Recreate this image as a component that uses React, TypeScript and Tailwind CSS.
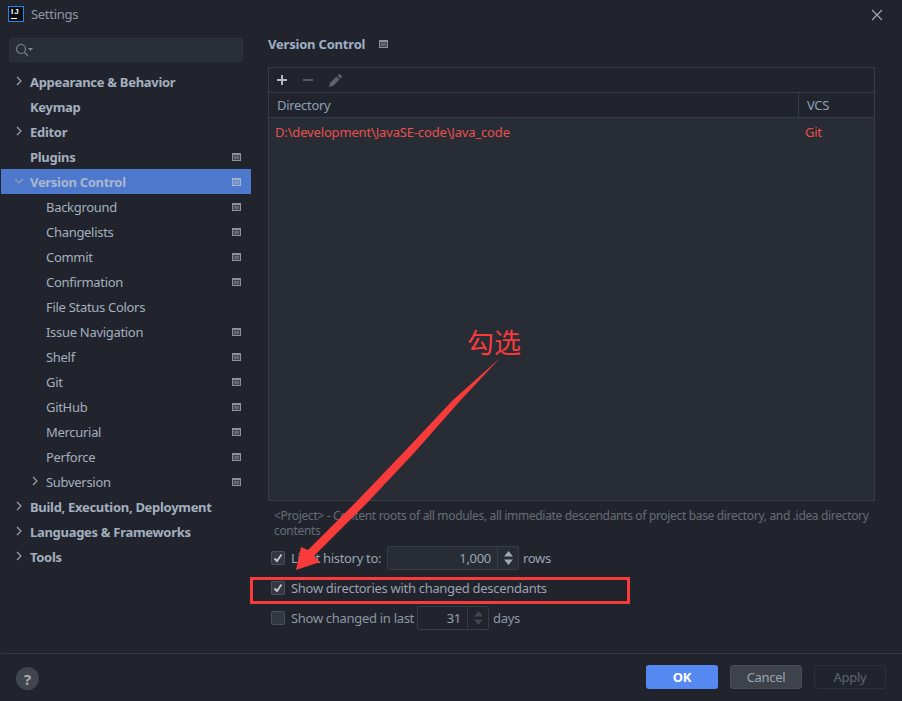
import React from "react";

const Badge = ({ className = "text-[#8b929c]" }: { className?: string }) => (
  <svg width="9" height="8" viewBox="0 0 9 8" className={className}>
    <path d="M0 0h9v8H0z M1 2v5h7V2z" fill="currentColor" fillRule="evenodd" />
    <path d="M1 2h7v5H1z" fill="currentColor" opacity="0.3" />
    <path d="M2 3h5v3H2z" fill="currentColor" opacity="0.45" />
  </svg>
);

const Chevron = ({ down = false, color = "#9aa1ab" }: { down?: boolean; color?: string }) => (
  <svg width="10" height="10" viewBox="0 0 10 10" fill="none" stroke={color} strokeWidth="1.2">
    {down ? <path d="M1 3l4 4 4-4" /> : <path d="M3 1l4 4-4 4" />}
  </svg>
);

type Item = { label: string; level: 0 | 1; chev?: boolean; badge?: boolean; selected?: boolean };

const items: Item[] = [
  { label: "Appearance & Behavior", level: 0, chev: true },
  { label: "Keymap", level: 0 },
  { label: "Editor", level: 0, chev: true },
  { label: "Plugins", level: 0, badge: true },
  { label: "Version Control", level: 0, chev: true, badge: true, selected: true },
  { label: "Background", level: 1, badge: true },
  { label: "Changelists", level: 1, badge: true },
  { label: "Commit", level: 1, badge: true },
  { label: "Confirmation", level: 1, badge: true },
  { label: "File Status Colors", level: 1 },
  { label: "Issue Navigation", level: 1, badge: true },
  { label: "Shelf", level: 1, badge: true },
  { label: "Git", level: 1, badge: true },
  { label: "GitHub", level: 1, badge: true },
  { label: "Mercurial", level: 1, badge: true },
  { label: "Perforce", level: 1, badge: true },
  { label: "Subversion", level: 1, chev: true, badge: true },
  { label: "Build, Execution, Deployment", level: 0, chev: true },
  { label: "Languages & Frameworks", level: 0, chev: true },
  { label: "Tools", level: 0, chev: true },
];

const Row = ({ item }: { item: Item }) => (
  <div className={`relative flex h-[25px] items-center pr-[10px] ${item.selected ? "bg-[#4e78cc]" : ""} ${item.level === 0 ? "pl-[29px]" : "pl-[45px]"}`}>
    {item.chev && (
      <span className={`absolute top-[7px] ${item.level === 0 ? "left-[13px]" : "left-[29px]"}`}>
        <Chevron down={item.selected} />
      </span>
    )}
    <span className={`flex-1 ${item.level === 0 ? "font-bold" : ""} ${item.selected ? "text-[#a9b7cf]" : "text-[#a3afbf]"}`}>{item.label}</span>
    {item.badge && <Badge className={item.selected ? "text-[#a3b3cf]" : "text-[#8b929c]"} />}
  </div>
);

const Check = ({ on }: { on: boolean }) => (
  <span className="flex h-[14px] w-[14px] shrink-0 items-center justify-center rounded-[2px] border border-[#4b505a] bg-[#333741]">
    {on && (
      <svg width="10" height="10" viewBox="0 0 10 10" fill="none" stroke="#c4c9d2" strokeWidth="1.8">
        <path d="M1.5 5.5l2.5 2.5L8.5 1.5" />
      </svg>
    )}
  </span>
);

const Spinner = ({ value, width, valueW, dim }: { value: string; width: string; valueW: string; dim?: boolean }) => (
  <div className={`flex items-stretch rounded-[2px] border border-[#383c45] ${dim ? "h-[24px]" : "h-[24px] bg-[#282c34]"} ${width}`}>
    <span className={`flex items-center justify-end pr-[6px] text-[#9aa3b0] ${valueW}`}>{value}</span>
    <span className="flex flex-1 items-center justify-center border-l border-[#383c45]">
      <svg width="9" height="14" viewBox="0 0 9 14" fill={dim ? "#41454e" : "#a3a9b3"}>
        <path d="M4.5 0L9 5.5H0z M4.5 14L0 8.5h9z" />
      </svg>
    </span>
  </div>
);

export default function App() {
  return (
    <div className="relative flex h-[701px] w-[902px] flex-col overflow-hidden bg-[#21242c] text-[13px] leading-[18px] tracking-[-0.3px] text-[#9aa5b5] [font-family:'Noto_Sans','Noto_Sans_CJK_SC',sans-serif]">
      {/* Title bar */}
      <header className="flex h-[30px] shrink-0 items-center pl-[8px] pr-[19px]">
        <span className="-mt-[2px] flex h-[16px] w-[16px] flex-col border border-[#1e88f0] bg-[#0c0c0c] pl-[2px] pt-[1px] text-[8px] font-bold leading-[8px] tracking-[1px] text-white [font-family:'Liberation_Sans',sans-serif]">
          IJ
          <span className="mt-[2px] h-[1px] w-[6px] bg-white" />
        </span>
        <span className="-mt-[2px] ml-[7px] flex-1 text-[#8d97a5]">Settings</span>
        <svg width="12" height="12" viewBox="0 0 12 12" stroke="#a4a9b2" strokeWidth="1.1" fill="none">
          <path d="M1 1l10 10M11 1L1 11" />
        </svg>
      </header>

      <div className="flex min-h-0 flex-1">
        {/* Sidebar */}
        <aside className="w-[251px] shrink-0 pl-[1px] pt-[8px]">
          <div className="ml-[8px] flex h-[24px] w-[234px] items-center rounded-[3px] border border-[#30343d] bg-[#292d35] pl-[5px]">
            <svg width="18" height="14" viewBox="0 0 18 14" fill="none" stroke="#7f858f" strokeWidth="1.1">
              <circle cx="6" cy="6" r="4.5" />
              <path d="M9.5 9.5l3.5 3.5" />
              <path d="M13 5h5l-2.5 3z" fill="#7f858f" stroke="none" />
            </svg>
          </div>
          <nav className="mt-[7px]">
            {items.map((it) => (
              <Row key={it.label} item={it} />
            ))}
          </nav>
        </aside>

        {/* Content */}
        <main className="flex min-w-0 flex-1 flex-col pl-[17px] pr-[27px]">
          <div className="flex h-[37px] shrink-0 items-start pt-[5px]">
            <span className="font-bold tracking-[-0.2px] text-[#9fb0c6]">Version Control</span>
            <span className="ml-[14px] mt-[5px] flex"><Badge /></span>
          </div>

          <div className="flex h-[434px] shrink-0 flex-col border border-[#383c45] bg-[#282c34]">
            <div className="flex h-[25px] shrink-0 items-center gap-[14px] border-b border-[#383c45] bg-[#21242c] pl-[7px]">
              <svg width="12" height="12" viewBox="0 0 12 12" fill="#b4b8bf"><path d="M5 1h2v4h4v2H7v4H5V7H1V5h4z" /></svg>
              <svg width="12" height="12" viewBox="0 0 12 12" fill="#565a62"><path d="M1 5h10v2H1z" /></svg>
              <svg width="15" height="15" viewBox="0 0 15 15" fill="#5e626a">
                <path d="M1 14l1-4 6.5-6.5 3 3L5 13z" />
                <path d="M9.5 2.5l1-1a1.4 1.4 0 012 0l1 1a1.4 1.4 0 010 2l-1 1z" />
              </svg>
            </div>
            <div className="flex h-[25px] shrink-0 items-center border-b border-[#383c45] bg-[#21242c]">
              <span className="w-[529px] pl-[8px] text-[#8fa0b5]">Directory</span>
              <span className="flex h-full flex-1 items-center border-l border-[#383c45] pl-[8px] text-[#8fa0b5]">VCS</span>
            </div>
            <div className="flex h-[28px] shrink-0 items-center text-[#e8504f]">
              <span className="w-[529px] pl-[6px] tracking-[-0.16px]">D:\development\JavaSE-code\Java_code</span>
              <span className="pl-[7px]">Git</span>
            </div>
          </div>

          <p className="mt-[7px] pl-[6px] text-[12px] leading-[15px] tracking-[-0.33px] text-[#666c76]">
            &lt;Project&gt; - Content roots of all modules, all immediate descendants of project base directory, and .idea directory contents
          </p>

          <div className="mt-[8px] flex h-[24px] items-center pl-[3px]">
            <Check on />
            <span className="ml-[6px] w-[96px] shrink-0 whitespace-nowrap text-[#9aa3b0]">Limit history to:</span>
            <Spinner value="1,000" width="w-[132px]" valueW="w-[109px]" />
            <span className="ml-[4px] text-[#9aa3b0]">rows</span>
          </div>
          <div className="mt-[6px] flex h-[24px] items-center pl-[3px]">
            <Check on />
            <span className="ml-[6px] text-[#9aa3b0]">Show directories with changed descendants</span>
          </div>
          <div className="mt-[6px] flex h-[24px] items-center pl-[3px]">
            <Check on={false} />
            <span className="ml-[6px] w-[126px] shrink-0 whitespace-nowrap text-[#8d96a3]">Show changed in last</span>
            <Spinner value="31" width="w-[72px]" valueW="w-[49px]" dim />
            <span className="ml-[4px] text-[#8d96a3]">days</span>
          </div>
        </main>
      </div>

      {/* Footer */}
      <footer className="flex h-[48px] shrink-0 items-start border-t border-[#363a42] pl-[15px] pr-[16px] pt-[11px] ml-[1px]">
        <span className="mt-[2px] flex h-[23px] w-[23px] items-center justify-center rounded-full bg-[#41454e] text-[15px] font-bold text-[#a6abb4]">?</span>
        <div className="ml-auto flex gap-[12px]">
          <button className="h-[24px] w-[72px] rounded-[3px] bg-[#5588f0] font-bold text-white">OK</button>
          <button className="h-[24px] w-[72px] rounded-[3px] border border-[#4a4e57] bg-[#3e424b] text-[#9aa3b0]">Cancel</button>
          <button className="h-[24px] w-[72px] rounded-[3px] border border-[#2e3139] text-[#5f646d]">Apply</button>
        </div>
      </footer>

      {/* Annotations drawn over the dialog */}
      <span className="absolute left-[467px] top-[326px] text-[27px] leading-[34px] tracking-normal text-[#f73b3b]">勾选</span>
      <svg className="pointer-events-none absolute left-0 top-0" width="902" height="701" viewBox="0 0 902 701">
        <path d="M500 358 L459 402 L414 453 L367 503 L314 556 L320 562 L296 570 L301 547 L308 550 L358 500 L403 453 L453 400 Z" fill="#f73b3b" />
      </svg>
      <div className="pointer-events-none absolute left-[250px] top-[577px] h-[27px] w-[380px] border-[3px] border-[#f73b3b]" />
    </div>
  );
}
